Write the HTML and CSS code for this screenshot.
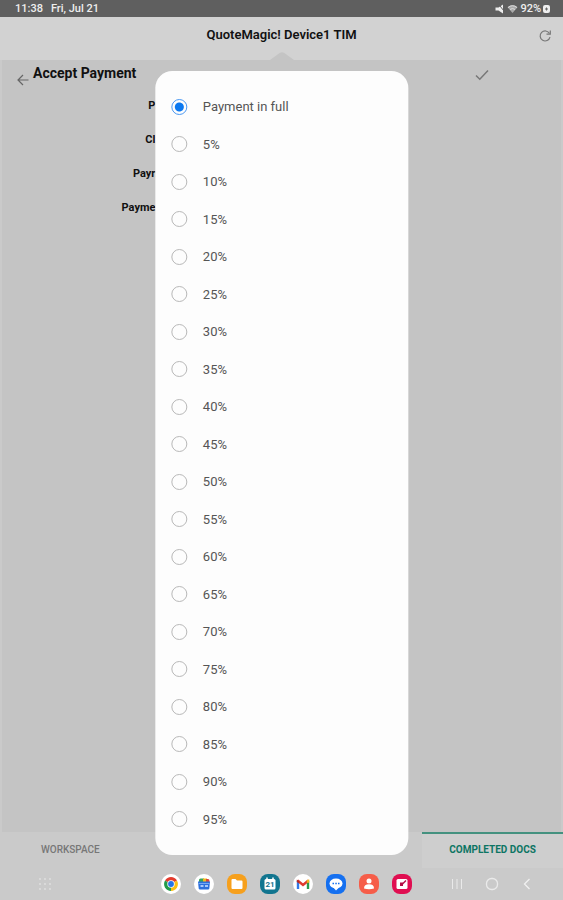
FILE: index.html
```html
<!DOCTYPE html>
<html lang="en">
<head>
<meta charset="utf-8">
<meta name="viewport" content="width=device-width, initial-scale=1">
<title>QuoteMagic! Accept Payment</title>
<link rel="stylesheet" href="styles.css">
</head>
<body>
<div class="status">
  <span>11:38</span><span>Fri, Jul 21</span>
  <div class="status-icons">
    <svg width="10" height="10" viewBox="0 0 10 10"><path d="M0.500 3.500h3L8 0.500v9L3.500 6.500h-3z" fill="#eee"/><path d="M5 2l4 5" stroke="#5f5f5f"/></svg>
    <svg width="11" height="10" viewBox="0 0 11 10"><path d="M0.5 3.2Q5.500 -1 10.500 3.200L5.500 9z" fill="#aaa"/><path d="M1 3.500Q5.500 0 10 3.500M3 5.500Q5.500 3.500 8 5.500" fill="none" stroke="#ddd"/></svg>
    <span>92%</span>
    <svg width="7" height="10" viewBox="0 0 7 10"><rect x="0" y="1" width="7" height="8" rx="2" fill="#eee"/><path d="M2 5h3M3.500 3.500v3" stroke="#666"/></svg>
  </div>
</div>
<header class="header">
  <h1>QuoteMagic! Device1 TIM</h1>
  <button class="icon-btn refresh" aria-label="Refresh"><svg width="14" height="14" viewBox="0 0 14 14" fill="none" stroke="#777" stroke-width="1.200"><path d="M11.500 4.500A5 5 0 1 0 12 8.200"/><path d="M12.300 1.500v3.700H8.500"/></svg></button>
  <svg class="notch" width="24" height="8" viewBox="0 0 24 8"><path d="M0 8L10 0.800Q12 -0.500 14 0.800L24 8z" fill="#c4c4c4"/></svg>
</header>
<main class="main">
  <div class="title-row">
    <button class="icon-btn back" aria-label="Back"><svg width="12" height="12" viewBox="0 0 12 12" fill="none" stroke="#666" stroke-width="1.200"><path d="M11.500 6H1M6 1L1 6l5 5"/></svg></button>
    <h2>Accept Payment</h2>
    <button class="icon-btn check" aria-label="Confirm"><svg width="14" height="12" viewBox="0 0 14 12" fill="none" stroke="#777" stroke-width="1.500"><path d="M1 6.500l3.800 3.700L13 1.500"/></svg></button>
  </div>
  <div class="labels"><span>P:</span><span>Cl:</span><span>Payr:</span><span>Payme:</span></div>
</main>
<nav class="tabs">
  <a href="#workspace" class="tab">WORKSPACE</a>
  <a href="#completed" class="tab active">COMPLETED DOCS</a>
</nav>
<footer class="dock">
  <button class="icon-btn" aria-label="All apps"><svg width="14" height="14" viewBox="0 0 14 14" fill="none" stroke="#eee" stroke-width="1.600" stroke-linecap="round" stroke-dasharray="0 5"><path d="M2 2h10.100M2 7h10.100M2 12h10.100"/></svg></button>
  <div class="apps">
    <svg viewBox="0 0 20 20"><circle cx="10" cy="10" r="10" fill="#fff"/><path d="M10 10L4 6.500A7 7 0 0 1 16 6.500z" fill="#e33b2e"/><path d="M10 10L16 6.500A7 7 0 0 1 10 17z" fill="#fbc116"/><path d="M10 10v7A7 7 0 0 1 4 6.500z" fill="#229b4b"/><circle cx="10" cy="10" r="3.700" fill="#fff"/><circle cx="10" cy="10" r="2.900" fill="#2474e8"/></svg>
    <svg viewBox="0 0 20 20"><circle cx="10" cy="10" r="10" fill="#fff"/><path d="M5 6q0-1.500 1.500-1.500H10V9H5z" fill="#36a35a"/><path d="M9 4.500h4V9H9z" fill="#f4b91d"/><path d="M12 5h2q1.500 0 1.500 2v2H12z" fill="#dd4638"/><path d="M4 7.500h12l-.7 7q-.1 1-1.300 1H6q-1.200 0-1.300-1z" fill="#2d70dc"/><path d="M4.500 9.500h11" stroke="#75a9f5"/><path d="M6.500 11h3v2h-3zM11 11h3v2h-3z" fill="#a9c8fa"/></svg>
    <svg viewBox="0 0 20 20"><rect width="20" height="20" rx="8" fill="#f6a01d"/><path d="M4.500 6q0-1 1-1h3L10 6.500h4.500q1 0 1 1V14q0 1-1 1h-9q-1 0-1-1z" fill="#fff"/></svg>
    <svg viewBox="0 0 20 20"><rect width="20" height="20" rx="8" fill="#11758f"/><rect x="4.500" y="5" width="11" height="10.500" rx="1.500" fill="#fff"/><path d="M7 3.500v3M13 3.500v3" stroke="#fff" stroke-width="1.500"/><text x="10" y="13" text-anchor="middle" class="date">21</text></svg>
    <svg viewBox="0 0 20 20"><circle cx="10" cy="10" r="10" fill="#fff"/><path d="M5 15V6.500" stroke="#3279e7" stroke-width="2.400"/><path d="M15 15V6.500" stroke="#299c4c" stroke-width="2.400"/><path d="M4.500 6.500L10 11l5.500-4.500" fill="none" stroke="#df3a2d" stroke-width="2.500"/><path d="M13.800 7.900V6.200l2.400-1v3.500h-2.400z" fill="#f4b91d"/><path d="M3.800 5.500l2.400 1.700v2L3.800 8z" fill="#b52b28"/></svg>
    <svg viewBox="0 0 20 20"><rect width="20" height="20" rx="8" fill="#1570f0"/><ellipse cx="10" cy="9.500" rx="6.500" ry="5" fill="#fff"/><path d="M7 13l3 3.500 3-3z" fill="#fff"/><path d="M6.500 9.500h1.500M9.300 9.500h1.500M12 9.500h1.500" stroke="#1570f0" stroke-width="1.500"/></svg>
    <svg viewBox="0 0 20 20"><rect width="20" height="20" rx="8" fill="#f65d49"/><circle cx="10" cy="7" r="2.500" fill="#fff"/><path d="M5 14.500q0-4.200 5-4.200t5 4.200q-5 1.500-10 0z" fill="#fff"/></svg>
    <svg viewBox="0 0 20 20"><rect width="20" height="20" rx="8" fill="#e00e51"/><rect x="4.500" y="5" width="11" height="10" rx="1.500" fill="#fff"/><path d="M8 8.500h3v3.500H8z" fill="#b40c44"/><path d="M10 10.500L14 6.500" stroke="#b40c44" stroke-width="1.500"/></svg>
  </div>
  <div class="system">
    <button class="icon-btn" aria-label="Recents"><svg width="12" height="12" viewBox="0 0 12 12" stroke="#eaeaea"><path d="M1.500 1v10M6 1v10M10.500 1v10"/></svg></button>
    <button class="icon-btn" aria-label="Home"><svg width="14" height="14" viewBox="0 0 14 14" fill="none" stroke="#eaeaea" stroke-width="1.300"><rect x="1.500" y="1.500" width="11" height="11" rx="5"/></svg></button>
    <button class="icon-btn" aria-label="System back"><svg width="12" height="12" viewBox="0 0 12 12" fill="none" stroke="#f0f0f0" stroke-width="1.300"><path d="M8.500 1l-5 5 5 5"/></svg></button>
  </div>
</footer>
<form class="dialog" role="dialog" aria-label="Payment amount">
  <label><input type="radio" name="amount" checked>Payment in full</label>
  <label><input type="radio" name="amount">5%</label>
  <label><input type="radio" name="amount">10%</label>
  <label><input type="radio" name="amount">15%</label>
  <label><input type="radio" name="amount">20%</label>
  <label><input type="radio" name="amount">25%</label>
  <label><input type="radio" name="amount">30%</label>
  <label><input type="radio" name="amount">35%</label>
  <label><input type="radio" name="amount">40%</label>
  <label><input type="radio" name="amount">45%</label>
  <label><input type="radio" name="amount">50%</label>
  <label><input type="radio" name="amount">55%</label>
  <label><input type="radio" name="amount">60%</label>
  <label><input type="radio" name="amount">65%</label>
  <label><input type="radio" name="amount">70%</label>
  <label><input type="radio" name="amount">75%</label>
  <label><input type="radio" name="amount">80%</label>
  <label><input type="radio" name="amount">85%</label>
  <label><input type="radio" name="amount">90%</label>
  <label><input type="radio" name="amount">95%</label>
</form>
</body>
</html>
```

FILE: styles.css
```css
* { box-sizing: border-box; }
body {
  margin: 0;
  min-height: 100vh;
  display: flex;
  flex-direction: column;
  position: relative;
  font-family: Roboto, "Liberation Sans", sans-serif;
  background: #cacaca;
  color: #111;
}
svg { display: block; }
h1, h2 { margin: 0; font-weight: 700; }
.icon-btn { border: 0; padding: 0; background: none; display: block; }

.status {
  display: flex;
  align-items: center;
  gap: 8px;
  height: 17px;
  padding: 0 13px 0 15px;
  background: #5f5f5f;
  color: #eee;
  font-size: 11px;
  font-weight: 500;
}
.status-icons { display: flex; align-items: center; gap: 2px; margin-left: auto; }

.header {
  position: relative;
  height: 43px;
  padding-top: 10px;
  background: #d2d2d2;
  text-align: center;
}
.header h1 { font-size: 13px; line-height: 15px; font-weight: 600; }
.refresh { position: absolute; right: 11px; top: 12px; }
.notch { position: absolute; left: 50%; bottom: 0; margin-left: -12px; }

.main { flex: 1; margin: 0 2px; background: #c4c4c4; }
.title-row { display: flex; align-items: flex-start; padding: 4px 72px 0 15px; }
.title-row h2 { font-size: 14px; line-height: 18px; margin-left: 4px; }
.back { margin-top: 10px; }
.check { margin: 5px 0 0 auto; }
.labels {
  display: flex;
  flex-direction: column;
  width: 28%;
  padding-top: 3px;
  text-align: right;
  font-size: 11px;
  font-weight: 700;
  line-height: 34px;
}

.tabs { display: grid; grid-template-columns: repeat(4, 1fr); height: 36px; }
.tab {
  display: flex;
  align-items: center;
  justify-content: center;
  padding-bottom: 4px;
  border-top: 2px solid transparent;
  color: #777;
  font-size: 10px;
  font-weight: 500;
  text-decoration: none;
}
.tab.active {
  grid-column: 4;
  border-color: #44917f;
  background: #cecece;
  color: #0d7563;
  font-weight: 700;
}

.dock { display: flex; align-items: center; height: 32px; padding: 0 30px 0 38px; }
.apps { display: flex; gap: 13px; margin: 0 auto; padding-left: 70px; }
.apps svg { width: 20px; height: 20px; }
.date { font-size: 8px; font-weight: 700; fill: #11758f; }
.system { display: flex; align-items: center; gap: 22px; }

.dialog {
  position: absolute;
  top: 71px;
  bottom: 45px;
  left: 50%;
  width: 45%;
  transform: translateX(-50%);
  display: grid;
  grid-auto-rows: 1fr;
  padding: 17px 16px;
  border-radius: 17px;
  background: #fdfdfd;
}
.dialog label {
  display: flex;
  align-items: center;
  gap: 16px;
  color: #555;
  font-size: 13px;
}
.dialog input {
  appearance: none;
  width: 16px;
  height: 16px;
  margin: 0;
  border: 1px solid #b8b8b8;
  border-radius: 50%;
}
.dialog input:checked {
  border-color: #4a98f2;
  background: radial-gradient(circle, #0b78f0 4px, transparent 5px);
}
```
